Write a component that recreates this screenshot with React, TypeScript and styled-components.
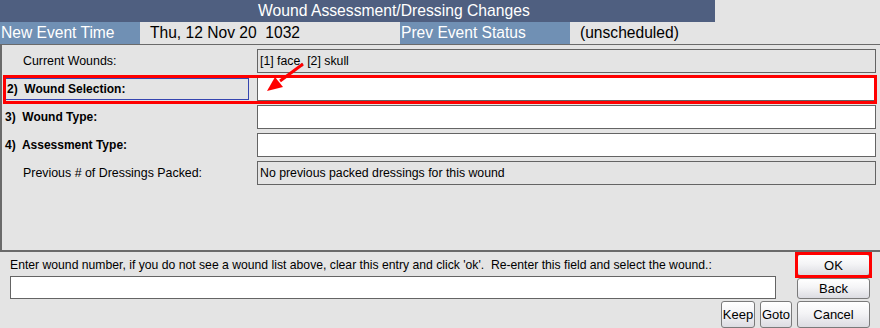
import styled, { createGlobalStyle } from "styled-components"

const GlobalStyle = createGlobalStyle`
  html, body {
    margin: 0;
    padding: 0;
    background: #e4e4e4;
  }
  body {
    font-family: "Liberation Sans", Arial, sans-serif;
  }
`

const Screen = styled.div`
  position: relative;
  width: 880px;
  height: 328px;
  overflow: hidden;
  background: #e4e4e4;
  display: flex;
  flex-direction: column;
`

const TitleRow = styled.div`
  height: 22px;
  display: flex;
`

const TitleBar = styled.div`
  width: 715px;
  background: #4f5f80;
  color: #ffffff;
  font-size: 15.7px;
  line-height: 22px;
  padding-left: 258px;
  box-sizing: border-box;
  white-space: nowrap;
`

const HeaderRow = styled.div`
  height: 22px;
  display: flex;
  font-size: 15.6px;
  line-height: 22px;
  white-space: pre;
`

const HeaderLabel = styled.div<{ $w: number }>`
  width: ${p => p.$w}px;
  background: #7090b4;
  color: #ffffff;
  padding-left: 1px;
  box-sizing: border-box;
`

const HeaderValue = styled.div<{ $w?: number }>`
  ${p => (p.$w ? `width: ${p.$w}px;` : "flex: 1;")}
  color: #000000;
  padding-left: 10px;
  box-sizing: border-box;
`

const Panel = styled.div`
  height: 208px;
  box-sizing: border-box;
  border-top: 1px solid #6a6a6a;
  border-left: 2px solid #6a6a6a;
  border-bottom: 2px solid #6a6a6a;
  padding: 4px 4px 0 3px;
  display: flex;
  flex-direction: column;
  gap: 4px;
`

const Row = styled.div<{ $marked?: boolean }>`
  position: relative;
  height: 24px;
  display: grid;
  grid-template-columns: 252px 1fr;
  align-items: center;
  font-size: 12px;
  ${p =>
    p.$marked &&
    `
    &::after {
      content: "";
      position: absolute;
      top: -2px;
      left: -2px;
      right: -1px;
      bottom: -3px;
      border: 3px solid #ff0000;
      pointer-events: none;
    }
  `}
`

const Label = styled.div<{ $bold?: boolean; $indent?: boolean }>`
  font-weight: ${p => (p.$bold ? "bold" : "normal")};
  font-size: ${p => (p.$bold ? 12 : 12.4)}px;
  padding-left: ${p => (p.$indent ? 18 : 0)}px;
  white-space: pre;
  color: #000000;
`

const FocusLabel = styled.div`
  height: 22px;
  width: 244px;
  box-sizing: border-box;
  border: 1px solid #3545b0;
  display: flex;
  align-items: center;
  padding-left: 1px;
  font-weight: bold;
  white-space: pre;
`

const Field = styled.div<{ $readonly?: boolean }>`
  height: 24px;
  box-sizing: border-box;
  border: 1px solid #646464;
  background: ${p => (p.$readonly ? "#e4e4e4" : "#ffffff")};
  padding-left: 2px;
  display: flex;
  align-items: center;
  font-size: 12.3px;
  color: #000000;
  white-space: nowrap;
`

const Footer = styled.div`
  flex: 1;
  display: grid;
  grid-template-columns: 783px 73px;
  grid-template-rows: 22px 21px 27px;
  column-gap: 4px;
  row-gap: 2px;
  padding: 2px 0 0 10px;
  font-size: 12.2px;
`

const Prompt = styled.div`
  display: flex;
  align-items: center;
  white-space: pre;
`

const PromptInput = styled.div`
  width: 766px;
  height: 23px;
  margin-top: -2px;
  box-sizing: border-box;
  border: 1px solid #646464;
  background: #ffffff;
`

const SideButtons = styled.div`
  display: flex;
  justify-content: flex-end;
  gap: 5px;
  padding-right: 1px;
`

const Button = styled.button<{ $w?: number; $marked?: boolean }>`
  position: relative;
  width: ${p => (p.$w ? `${p.$w}px` : "100%")};
  height: 100%;
  margin: 0;
  padding: 0;
  border: 1px solid #7a7a7a;
  border-radius: 3px;
  background: linear-gradient(#ffffff, #f4f4f6 45%, #dcdce2);
  font-family: "Liberation Sans", Arial, sans-serif;
  font-size: 13px;
  color: #000000;
  ${p =>
    p.$marked &&
    `
    &::after {
      content: "";
      position: absolute;
      top: -3px;
      left: -3px;
      right: -3px;
      bottom: -3px;
      border: 3px solid #ff0000;
    }
  `}
`

const Arrow = styled.svg`
  position: absolute;
  left: 0;
  top: 0;
  pointer-events: none;
`

export default function App() {
  return (
    <Screen>
      <GlobalStyle />
      <TitleRow>
        <TitleBar>Wound Assessment/Dressing Changes</TitleBar>
      </TitleRow>
      <HeaderRow>
        <HeaderLabel $w={140}>New Event Time</HeaderLabel>
        <HeaderValue $w={260}>Thu, 12 Nov 20  1032</HeaderValue>
        <HeaderLabel $w={170}>Prev Event Status</HeaderLabel>
        <HeaderValue>(unscheduled)</HeaderValue>
      </HeaderRow>
      <Panel>
        <Row>
          <Label $indent>Current Wounds:</Label>
          <Field $readonly>[1] face, [2] skull</Field>
        </Row>
        <Row $marked>
          <FocusLabel>2)  Wound Selection:</FocusLabel>
          <Field />
        </Row>
        <Row>
          <Label $bold>3)  Wound Type:</Label>
          <Field />
        </Row>
        <Row>
          <Label $bold>4)  Assessment Type:</Label>
          <Field />
        </Row>
        <Row>
          <Label $indent>Previous # of Dressings Packed:</Label>
          <Field $readonly>No previous packed dressings for this wound</Field>
        </Row>
      </Panel>
      <Footer>
        <Prompt>
          Enter wound number, if you do not see a wound list above, clear this entry and click 'ok'.  Re-enter this field and select the wound.:
        </Prompt>
        <Button $marked>OK</Button>
        <PromptInput />
        <Button>Back</Button>
        <SideButtons>
          <Button $w={34}>Keep</Button>
          <Button $w={32}>Goto</Button>
        </SideButtons>
        <Button>Cancel</Button>
      </Footer>
      <Arrow width="880" height="328" viewBox="0 0 880 328">
        <line x1="303" y1="64" x2="280" y2="81" stroke="#ff0000" strokeWidth="3" />
        <polygon points="267,91 275,77 283,87" fill="#ff0000" />
      </Arrow>
    </Screen>
  )
}
